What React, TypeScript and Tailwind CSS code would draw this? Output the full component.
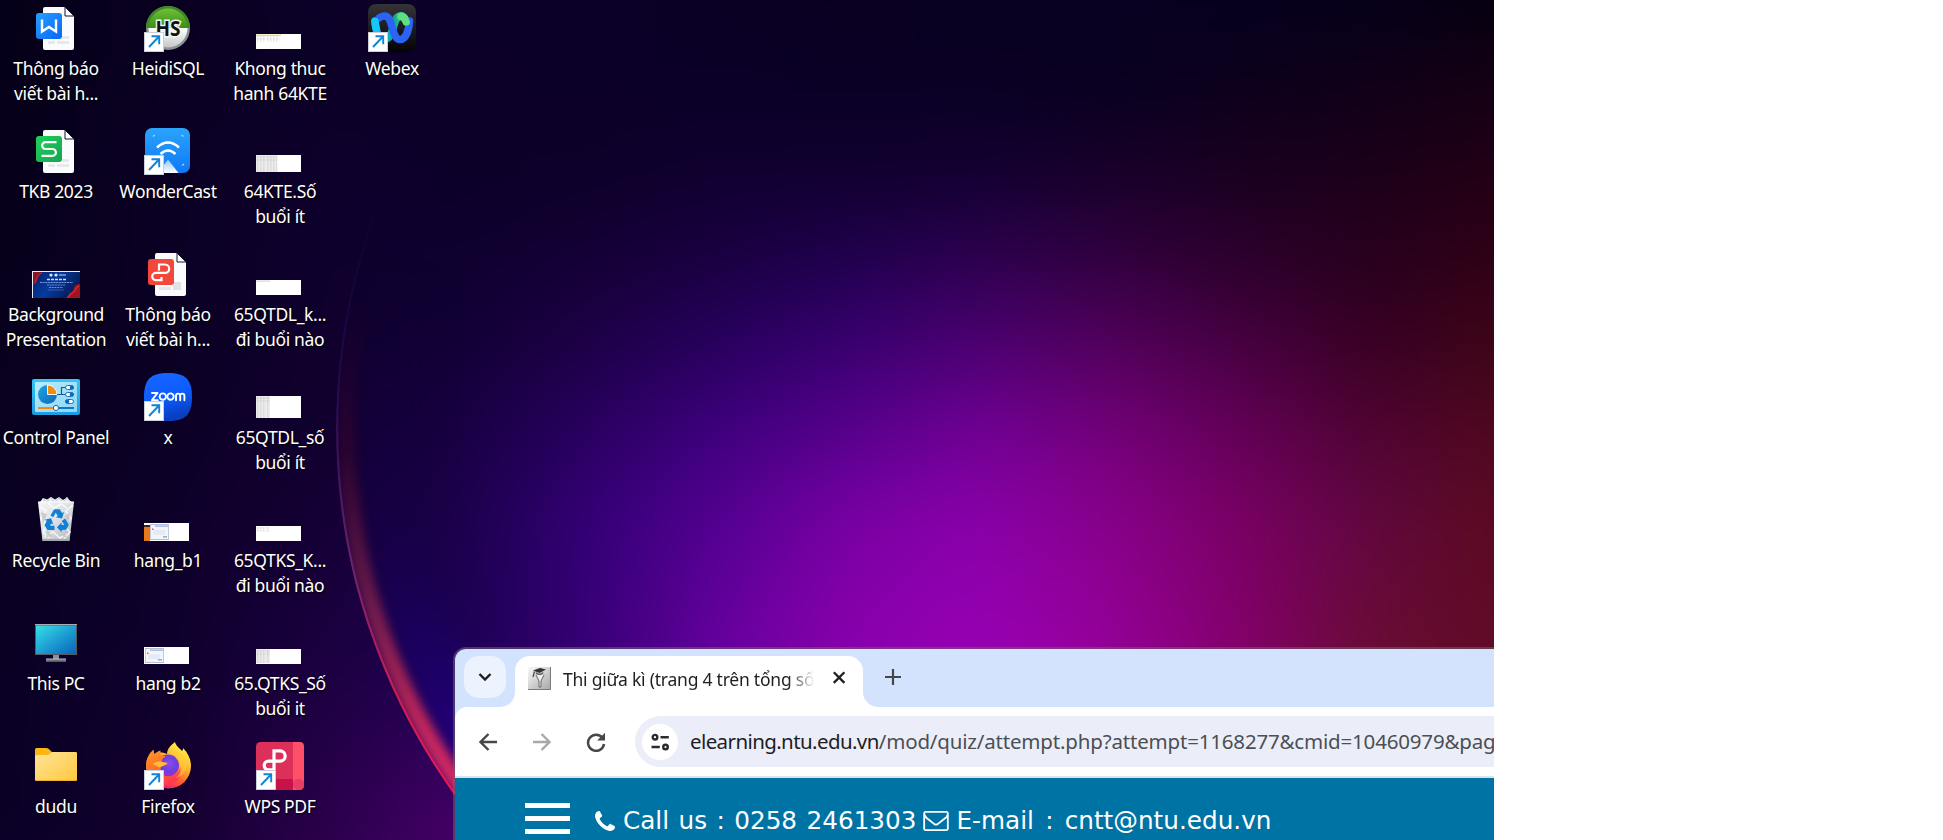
import React from "react";

/* ---------- wallpaper ---------- */

const meshX = [0, 170, 340, 460, 590, 720, 850, 980, 1110, 1240, 1370, 1494];

const mesh: { y: number; c: string[] }[] = [
  { y: 0, c: ["#050018", "#090020", "#0c0028", "#0b0028", "#0b0028", "#0a0024", "#090020", "#080020", "#070020", "#06001e", "#06001a", "#050010"] },
  { y: 87, c: ["#060019", "#0a0022", "#0c0028", "#0d002a", "#0c0028", "#0b0028", "#0a0026", "#0a0024", "#090020", "#0c001c", "#100018", "#160014"] },
  { y: 173, c: ["#06001a", "#0b0024", "#0e002c", "#0c0029", "#0d0029", "#100030", "#11002e", "#120032", "#18002a", "#1a0020", "#1c001a", "#220014"] },
  { y: 260, c: ["#07001b", "#0b0024", "#0f002e", "#0e0030", "#150036", "#1a0042", "#200050", "#2e0050", "#320040", "#2c002c", "#28001e", "#300016"] },
  { y: 347, c: ["#08001c", "#0b0024", "#10002e", "#130036", "#1e0048", "#280060", "#3a0072", "#4e0074", "#54005e", "#480042", "#3a0024", "#3e0618"] },
  { y: 433, c: ["#08001e", "#0c0026", "#120030", "#180044", "#2a0062", "#400080", "#58008e", "#720096", "#74007a", "#640058", "#500432", "#500820"] },
  { y: 520, c: ["#090020", "#0d0028", "#160036", "#1c004c", "#340078", "#540092", "#7a00a4", "#8a00aa", "#88008a", "#7a0064", "#600840", "#5c0a20"] },
  { y: 650, c: ["#0a0024", "#0e002c", "#1c0042", "#1c0052", "#360076", "#6800a0", "#8a00ac", "#9800b4", "#940098", "#84006c", "#6a0c34", "#600c28"] },
  { y: 840, c: ["#0a0026", "#12002e", "#2e0050", "#480068", "#480078", "#6a00a0", "#8a00ac", "#9600b4", "#920098", "#84006c", "#6a0c34", "#600c28"] },
];

function Wallpaper() {
  return (
    <svg className="absolute inset-0 h-full w-full" viewBox="0 0 1494 840" preserveAspectRatio="none" aria-hidden="true">
      <defs>
        {mesh.map((row, i) => (
          <linearGradient key={row.y} id={`row${i}`} gradientUnits="userSpaceOnUse" x1="0" y1="0" x2="1494" y2="0">
            {row.c.map((color, k) => (
              <stop key={meshX[k]} offset={meshX[k] / 1494} stopColor={color} />
            ))}
          </linearGradient>
        ))}
        <linearGradient id="rim" gradientUnits="userSpaceOnUse" x1="0" y1="200" x2="0" y2="800">
          <stop offset="0" stopColor="#2a1068" stopOpacity="0" />
          <stop offset="0.3" stopColor="#2c1464" stopOpacity="0.5" />
          <stop offset="0.6" stopColor="#6a2070" />
          <stop offset="0.8" stopColor="#c41c55" />
          <stop offset="1" stopColor="#ea1a50" />
        </linearGradient>
        <linearGradient id="band" gradientUnits="userSpaceOnUse" x1="0" y1="300" x2="0" y2="800">
          <stop offset="0" stopColor="#2c0030" stopOpacity="0" />
          <stop offset="0.3" stopColor="#30042e" stopOpacity="0.8" />
          <stop offset="0.6" stopColor="#6a1a4a" />
          <stop offset="0.85" stopColor="#c0265a" />
          <stop offset="1" stopColor="#d82a68" />
        </linearGradient>
        <linearGradient id="blue" gradientUnits="userSpaceOnUse" x1="0" y1="280" x2="0" y2="800">
          <stop offset="0" stopColor="#10003c" stopOpacity="0" />
          <stop offset="0.5" stopColor="#160048" stopOpacity="0.7" />
          <stop offset="1" stopColor="#22008c" />
        </linearGradient>
        <filter id="mesh" filterUnits="userSpaceOnUse" x="-120" y="-120" width="1734" height="1080" colorInterpolationFilters="sRGB"><feGaussianBlur stdDeviation="28" /></filter>
        <filter id="soft" filterUnits="userSpaceOnUse" x="280" y="-260" width="1400" height="1400" colorInterpolationFilters="sRGB"><feGaussianBlur stdDeviation="5" /></filter>
        <filter id="softer" filterUnits="userSpaceOnUse" x="240" y="-300" width="1480" height="1480" colorInterpolationFilters="sRGB"><feGaussianBlur stdDeviation="18" /></filter>
        <clipPath id="orb"><path d="M700 -141.800A628 628 0 0 0 700 997.800z" /></clipPath>
      </defs>
      <g filter="url(#mesh)">
        <rect x="-120" y="-120" width="1734" height="120" fill="url(#row0)" />
        {mesh.slice(0, -1).map((row, i) => {
          const h = mesh[i + 1].y - row.y;
          return (
            <g key={row.y}>
              <linearGradient id={`alpha${i}`} gradientUnits="userSpaceOnUse" x1="0" y1={row.y} x2="0" y2={row.y + h}>
                <stop offset="0" stopColor="#fff" stopOpacity="0" />
                <stop offset="1" stopColor="#fff" stopOpacity="1" />
              </linearGradient>
              <mask id={`lin${i}`} maskUnits="userSpaceOnUse" x="-120" y={row.y} width="1734" height={h} style={{ maskType: "alpha" }}>
                <rect x="-120" y={row.y} width="1734" height={h} fill={`url(#alpha${i})`} />
              </mask>
              <rect x="-120" y={row.y} width="1734" height={h} fill={`url(#row${i})`} />
              <rect x="-120" y={row.y} width="1734" height={h} fill={`url(#row${i + 1})`} mask={`url(#lin${i})`} />
            </g>
          );
        })}
        <rect x="-120" y="840" width="1734" height="120" fill="url(#row8)" />
      </g>
      <g clipPath="url(#orb)">
        <circle cx="964" cy="428" r="580" fill="none" stroke="url(#blue)" strokeWidth="70" filter="url(#softer)" />
        <circle cx="964" cy="428" r="618" fill="none" stroke="url(#band)" strokeWidth="18" filter="url(#soft)" />
        <circle cx="964" cy="428" r="627" fill="none" stroke="url(#rim)" strokeWidth="2.500" />
      </g>
    </svg>
  );
}

/* ---------- desktop icons (48 x 48 artboards) ---------- */

function Art({ children, shortcut = false }: { children: React.ReactNode; shortcut?: boolean }) {
  return (
    <svg className="block h-12 w-12" viewBox="0 0 48 48" aria-hidden="true">
      {children}
      {shortcut && (
        <g>
          <rect x="0" y="28" width="20" height="20" fill="#c9d0dc" />
          <rect x="1" y="29" width="18" height="18" fill="#fff" />
          <path d="M5 43L14.5 33M7.5 32.3h7.7v8" fill="none" stroke="#0f84d8" strokeWidth="1.9" />
        </g>
      )}
    </svg>
  );
}

function DocPage() {
  return (
    <g>
      <path d="M13 3h20l9 9v32a2 2 0 0 1-2 2H13a2 2 0 0 1-2-2V5a2 2 0 0 1 2-2z" fill="#fafbfd" />
      <path d="M33 3v9h9z" fill="#fff" stroke="#15152e" strokeWidth="1" />
      <path d="M16 38.5h7M25 38.5h12M30 33.5h7" stroke="#e3e6ea" strokeWidth="2.600" />
    </g>
  );
}

function WordDoc() {
  return (
    <Art>
      <defs>
        <linearGradient id="wd" x1="0" y1="0" x2="1" y2="1"><stop stopColor="#22a0ff" /><stop offset="1" stopColor="#0a66f8" /></linearGradient>
      </defs>
      <DocPage />
      <rect x="4" y="9" width="26" height="26" rx="3" fill="url(#wd)" />
      <path d="M10 15.500v12L17 23l7 4.500v-12" fill="none" stroke="#fff" strokeWidth="2.400" strokeLinejoin="miter" />
    </Art>
  );
}

function SheetDoc() {
  return (
    <Art>
      <defs>
        <linearGradient id="sd" x1="0" y1="0" x2="1" y2="1"><stop stopColor="#20d05a" /><stop offset="1" stopColor="#13a450" /></linearGradient>
      </defs>
      <DocPage />
      <rect x="4" y="9" width="26" height="26" rx="3" fill="url(#sd)" />
      <path d="M24.5 15.200h-11a3.400 3.400 0 0 0 0 6.800h7a3.400 3.400 0 0 1 0 6.800H9.500" fill="none" stroke="#fff" strokeWidth="2.200" />
    </Art>
  );
}

function PdfDoc() {
  return (
    <Art>
      <path d="M13 3h20l9 9v32a2 2 0 0 1-2 2H13a2 2 0 0 1-2-2V5a2 2 0 0 1 2-2z" fill="#fafbfd" />
      <path d="M33 3v9h9z" fill="#fff" stroke="#15152e" strokeWidth="1" />
      <path d="M15 38.5h12" stroke="#e3e6ea" strokeWidth="3" />
      <rect x="29" y="32" width="8" height="8" fill="#dfe2e6" />
      <rect x="4" y="9" width="26" height="26" rx="3" fill="#f4473c" />
      <path d="M15 20.500v-6h6a4.200 4.200 0 0 1 0 8.400h-9.200a3.600 3.600 0 0 0 0 7.200h5.700v-3" fill="none" stroke="#fff" strokeWidth="2.200" />
    </Art>
  );
}

function Heidi() {
  return (
    <Art shortcut>
      <defs>
        <linearGradient id="hg" x1="0" y1="0" x2="0" y2="1"><stop stopColor="#6fc038" /><stop offset="1" stopColor="#3a8d18" /></linearGradient>
        <linearGradient id="hw" x1="0" y1="0" x2="0" y2="1"><stop stopColor="#fff" /><stop offset="1" stopColor="#c4c6c8" /></linearGradient>
      </defs>
      <circle cx="24" cy="24" r="22" fill="#8d9196" />
      <path d="M2 24a22 22 0 0 1 44 0z" fill="#3c8a1c" />
      <path d="M4.500 24a19.500 19.500 0 0 1 39 0z" fill="url(#hg)" />
      <path d="M4.500 24a19.500 19.500 0 0 0 39 0z" fill="url(#hw)" />
      <text x="24" y="31.500" textAnchor="middle" fontFamily="Open Sans, sans-serif" fontWeight="700" fontSize="21" fill="#111" stroke="#f4f6f2" strokeWidth="3" paintOrder="stroke" textLength="25" lengthAdjust="spacingAndGlyphs">HS</text>
    </Art>
  );
}

function Wonder() {
  return (
    <Art shortcut>
      <defs>
        <linearGradient id="wc" x1="0" y1="0" x2="0" y2="1"><stop stopColor="#2aa4fb" /><stop offset="1" stopColor="#0f78f8" /></linearGradient>
        <linearGradient id="wt" x1="0" y1="0" x2="0" y2="1"><stop stopColor="#8cc8ff" /><stop offset="1" stopColor="#fff" /></linearGradient>
      </defs>
      <rect x="1" y="1" width="45" height="45" rx="7" fill="url(#wc)" />
      <path d="M13 20.500q11-10 22 0" fill="none" stroke="#fff" strokeWidth="2.600" />
      <path d="M16.500 27q7.500-7 15 0" fill="none" stroke="#fff" strokeWidth="2.600" />
      <path d="M24 32.500L34.500 46h-21z" fill="url(#wt)" />
      <path d="M9 9.500l1.800-1.500M37.500 8l2 1.500M38 38.500l2-1.500" stroke="#a9dbff" strokeWidth="1.200" />
    </Art>
  );
}

function Webex() {
  return (
    <Art shortcut>
      <defs>
        <linearGradient id="wb" x1="0" y1="0" x2="0" y2="1"><stop stopColor="#343438" /><stop offset="1" stopColor="#040406" /></linearGradient>
        <linearGradient id="w1" x1="0" y1="0" x2="1" y2="1"><stop stopColor="#12b8f8" /><stop offset="1" stopColor="#12a8a0" /></linearGradient>
        <linearGradient id="w3" x1="0" y1="0" x2="1" y2="0"><stop stopColor="#0ea08c" /><stop offset="1" stopColor="#5ce080" /></linearGradient>
      </defs>
      <rect width="48" height="48" rx="8" fill="url(#wb)" />
      <path d="M7 17c.500 10 4 18.500 9.500 18.500S24 28 26 21s4-9 8-9" fill="none" stroke="url(#w1)" strokeWidth="7.500" strokeLinecap="round" />
      <path d="M25 21c1.500-5.500 4-9 7.500-9 3 0 5 2.300 6 6" fill="none" stroke="url(#w3)" strokeWidth="7.500" strokeLinecap="round" />
      <path d="M11 14c2-1.500 3.500-2 5-2 5 0 6 4 8 11s4 12.500 8 12.500c5.500 0 9-8.500 9.500-18.500" fill="none" stroke="#2a63f6" strokeWidth="7.500" strokeLinecap="round" />
      <path d="M33 12.300c2.500.700 4.300 2.700 5.200 5.700" fill="none" stroke="#5ce080" strokeWidth="7.500" strokeLinecap="round" />
      <path d="M7 17.500c.300 3 .600 5 1.200 7" fill="none" stroke="#16c8fa" strokeWidth="7.500" strokeLinecap="round" />
    </Art>
  );
}

function Zoom() {
  return (
    <Art shortcut>
      <defs>
        <linearGradient id="zm" x1="0" y1="0" x2="0.300" y2="1"><stop stopColor="#1a66ff" /><stop offset="0.600" stopColor="#0b5cff" /><stop offset="1" stopColor="#0840c0" /></linearGradient>
      </defs>
      <path d="M24 0c17 0 24 6 24 24s-7 24-24 24S0 42 0 24 7 0 24 0z" fill="url(#zm)" />
      <g fill="none" stroke="#fff" strokeWidth="1.900" strokeLinejoin="round" strokeLinecap="round">
        <path d="M8 20h5.500L8 27.200h5.800" />
        <circle cx="18.800" cy="23.600" r="3.200" />
        <circle cx="26.500" cy="23.600" r="3.200" />
        <path d="M32 27.300v-4.600a2.100 2.100 0 0 1 4.200 0v4.600M36.200 22.700a2.100 2.100 0 0 1 4.200 0v4.600" />
      </g>
    </Art>
  );
}

function ControlPanel() {
  return (
    <Art>
      <defs>
        <linearGradient id="cp" x1="0" y1="0" x2="0" y2="1"><stop stopColor="#38c6f6" /><stop offset="1" stopColor="#1d9ade" /></linearGradient>
        <linearGradient id="ci" x1="0" y1="0" x2="1" y2="1"><stop stopColor="#b8ecfc" /><stop offset="1" stopColor="#8cd6f4" /></linearGradient>
        <linearGradient id="cb" x1="0" y1="0" x2="1" y2="1"><stop stopColor="#1fa4e4" /><stop offset="1" stopColor="#0c68b8" /></linearGradient>
      </defs>
      <rect y="6" width="48" height="36" rx="2" fill="url(#cp)" />
      <rect x="3" y="9" width="42" height="30" rx="1" fill="url(#ci)" />
      <circle cx="15.500" cy="21.500" r="9.500" fill="url(#cb)" />
      <path d="M15.500 21.500V12a9.500 9.500 0 0 1 9.500 9.500z" fill="#f58c10" stroke="#eefaff" strokeWidth="1" />
      <path d="M25 21.500h4.500v-7H34M29.500 21.500H34" fill="none" stroke="#1a5a90" strokeWidth="1.200" />
      <g fill="#fff" stroke="#1374c0" strokeWidth="1">
        <rect x="33.500" y="12.500" width="8" height="4" rx="2" /><rect x="33.500" y="19.500" width="8" height="4" rx="2" /><rect x="33.500" y="26.500" width="8" height="4" rx="2" />
      </g>
      <circle cx="39.700" cy="14.500" r="2" fill="#0c68b8" /><circle cx="39.700" cy="21.500" r="2" fill="#0c68b8" /><circle cx="35.300" cy="28.500" r="2" fill="#0c68b8" />
      <path d="M6 35h18" stroke="#f58c10" strokeWidth="2" /><path d="M24 35h18" stroke="#0f78c8" strokeWidth="2" />
      <circle cx="24" cy="35" r="2.600" fill="#fff" stroke="#0c68b8" strokeWidth="1" />
    </Art>
  );
}

function RecycleBin() {
  return (
    <Art>
      <defs>
        <linearGradient id="rb" x1="0" y1="0" x2="1" y2="1"><stop stopColor="#f4f6f8" /><stop offset="0.500" stopColor="#dcdfe3" /><stop offset="1" stopColor="#b0b4ba" /></linearGradient>
      </defs>
      <path d="M8 6l3-4 4 1.500L19 1l4 2.500L27 1l4 3 4-2.500 3 3 3 3H7z" fill="#eceef0" />
      <path d="M11 2l3 5 5-6 3 6 5-5 4 5 4-6 3 5" fill="none" stroke="#b9bdc4" strokeWidth="0.800" />
      <path d="M6 6h36l-4.500 39h-27z" fill="url(#rb)" />
      <path d="M6 6h36" stroke="#fff" strokeWidth="1.200" />
      <path d="M7 10l7 5-5 7 6 8-4 6 6 6M41 9l-7 6 5 7-6 9 5 5-6 7M16 7l6 5 7-4 6 4M13 41l8-5 7 6 7-4" fill="none" stroke="#fff" strokeWidth="1.500" opacity="0.800" />
      <path d="M9 16l6 2-4 10zM38 16l-5 4 4 9zM15 34l5 5-6 3zM34 35l-4 5 5 2z" fill="#c2c6cb" opacity="0.800" />
      <path d="M10.500 43h27l-.3 2h-26.400z" fill="#a5a9af" />
      <g fill="#0f80d8">
        <path d="M18.500 19.500l3-5.200a2 2 0 0 1 1.700-1h4.500l2.300 3.700 2-1-2 6.500-6.200-1.300 2-1.200-2-3.200-2.600 4.500z" />
        <path d="M33 22.500l3.300 5.200a2 2 0 0 1 0 2l-2.200 4-4.500.200v2.300l-4.600-4.900 4.600-4.800v2.400h2.800l-2.600-4z" />
        <path d="M22.500 34h-6a2 2 0 0 1-1.800-1L12.600 29l2.200-4.200-2-1 6.400-1.600 2 6.300-2-1-1.200 2.200h4.500z" />
      </g>
    </Art>
  );
}

function ThisPC() {
  return (
    <Art>
      <defs>
        <linearGradient id="pc" x1="0" y1="0" x2="1" y2="1"><stop stopColor="#38e0e4" /><stop offset="0.500" stopColor="#1ea0d4" /><stop offset="1" stopColor="#0a62b8" /></linearGradient>
      </defs>
      <rect x="21" y="36" width="6" height="5" fill="#8b9198" />
      <rect x="14" y="40" width="20" height="2.800" fill="#6c7279" />
      <path d="M14 40h20" stroke="#b9bec4" strokeWidth="1" />
      <rect x="3" y="5" width="42" height="31" rx="0.600" fill="#545a62" />
      <path d="M3 5.500h42" stroke="#a8adb3" strokeWidth="1" />
      <rect x="4" y="6.500" width="40" height="28.500" fill="url(#pc)" />
    </Art>
  );
}

function Folder() {
  return (
    <Art>
      <defs>
        <linearGradient id="fo" x1="0" y1="0" x2="1" y2="1"><stop stopColor="#ffe49a" /><stop offset="1" stopColor="#ffc93c" /></linearGradient>
      </defs>
      <path d="M4.500 6h10a3 3 0 0 1 2 .8L20 10h23.500A1.500 1.500 0 0 1 45 11.500V20H3V7.500A1.500 1.500 0 0 1 4.500 6z" fill="#fbb615" />
      <path d="M3 14.500A1.500 1.500 0 0 1 4.500 13h11a3 3 0 0 0 2-.800l1.500-1.400a3 3 0 0 1 2-.800h22.500A1.500 1.500 0 0 1 45 11.500v26a1.500 1.500 0 0 1-1.500 1.500h-39A1.500 1.500 0 0 1 3 37.500z" fill="url(#fo)" />
      <path d="M3.500 38.500h41" stroke="#e8ac28" strokeWidth="0.800" />
    </Art>
  );
}

function Firefox() {
  return (
    <Art shortcut>
      <defs>
        <linearGradient id="ff" x1="0.800" y1="0.100" x2="0.250" y2="0.950"><stop stopColor="#fff04a" /><stop offset="0.350" stopColor="#ffb02a" /><stop offset="0.650" stopColor="#ff5a30" /><stop offset="1" stopColor="#e8167a" /></linearGradient>
        <radialGradient id="fp" cx="0.550" cy="0.400" r="0.600"><stop stopColor="#8a4cf0" /><stop offset="0.600" stopColor="#6a40e0" /><stop offset="1" stopColor="#a02cc8" /></radialGradient>
        <linearGradient id="fx" x1="0" y1="0" x2="0.600" y2="1"><stop stopColor="#ff9c20" /><stop offset="0.600" stopColor="#ff6a2a" /><stop offset="1" stopColor="#ff3a50" /></linearGradient>
      </defs>
      <path d="M31 0c1 4 4 5.500 7 9 1-1 1-2 1-3 5 5 8 11 8 18a22.500 22.500 0 0 1-45 0c0-6 2-10 5-14l1 4c5-5 10-4 15-2 0-5 4-9 8-12z" fill="url(#ff)" />
      <circle cx="24" cy="23.500" r="11" fill="url(#fp)" />
      <path d="M9.500 7.500l.8 4.500c1.700-1.500 4-3 6.200-3.500l-.3 4.500c2.300 0 4 .500 5.500 1.800-2.500.7-4 2.200-4 4.700 1.700 1.500 4.800.5 6.300 1.300-.7 2.700-5.200 3-7 4.200-1.500 5 2.500 9.500 7 9.500 7 0 11.500-4.500 12.500-10 3 8-3 17-12.500 18.500C12 44.500 2 36 2 24.500 2 17 5.500 11 9.500 7.500z" fill="url(#fx)" />
      <path d="M9 22c3-3 7-3.500 14-.8-2 2.800-5.500 2.500-7.500 4.300z" fill="#ffbd38" />
      <path d="M30 13c5 3 6.500 7.500 6.500 13 0 4-2 8-5.500 10.500C38 35 43 29 42.500 21 42 15 38 12 35 9z" fill="#ffd23c" opacity="0.550" />
    </Art>
  );
}

function WpsPdf() {
  return (
    <Art shortcut>
      <defs>
        <clipPath id="wpsClip"><rect width="48" height="48" rx="4.500" /></clipPath>
      </defs>
      <g clipPath="url(#wpsClip)">
        <rect width="48" height="48" fill="#dc2f5a" />
        <rect y="37" width="40" height="11" fill="#c8134a" />
        <rect x="37" width="11" height="48" fill="#fe5068" />
        <rect x="37" y="37" width="11" height="11" rx="5" fill="#e63e64" />
      </g>
      <path d="M18 28V8.800h6a5.200 5.200 0 0 1 0 10.400h-11.500a4.300 4.300 0 0 0 0 8.600h5" fill="none" stroke="#fff" strokeWidth="3.200" />
    </Art>
  );
}

function Poster() {
  return (
    <Art>
      <defs>
        <linearGradient id="po" x1="0" y1="0" x2="1" y2="0.400"><stop stopColor="#04206a" /><stop offset="0.500" stopColor="#063a9c" /><stop offset="1" stopColor="#041c58" /></linearGradient>
      </defs>
      <rect x="0" y="21" width="48" height="27" fill="#e8ecf4" />
      <rect x="1" y="22" width="47" height="26" fill="url(#po)" />
      <path d="M1 35c3-1 4-4 5-8s3-5 6-5H1z" fill="#8e1424" /><path d="M3 33c2-4 2-9 7-10" fill="none" stroke="#d8202c" strokeWidth="1.200" />
      <path d="M48 34c-4 0-6 2-7 6s-5 4-7 8h14z" fill="#a01422" /><path d="M47 36c-4 1-3 6-7 7-3 1-3 3-4 5" fill="none" stroke="#dc2430" strokeWidth="1.400" />
      <circle cx="19" cy="25" r="1.600" fill="#dfe8ff" /><circle cx="24" cy="25" r="1.600" fill="#dfe8ff" /><path d="M27 25h7" stroke="#8fa8e0" strokeWidth="1.400" />
      <path d="M15 29.500h20" stroke="#d0dcff" strokeWidth="1.500" strokeDasharray="3 1" />
      <path d="M8 32.500h33" stroke="#7c98e0" strokeWidth="1" strokeDasharray="2 .7" /><path d="M15 35h18M17 37.500h14" stroke="#6a88d4" strokeWidth="1" strokeDasharray="2 .7" /><path d="M16 40h16" stroke="#3e60b8" strokeWidth="0.800" />
    </Art>
  );
}

function Thumb({ h, children }: { h: number; children?: React.ReactNode }) {
  return (
    <svg className="block w-12" viewBox={`0 ${h - 45} 48 48`} height={48} aria-hidden="true">
      <rect width="45" height={h} fill="#fff" />
      {children}
    </svg>
  );
}

function Lines({ w, h, columns = true }: { w: number; h: number; columns?: boolean }) {
  return (
    <g>
      {columns && <rect width={w} height={h} fill="#ececec" />}
      {[1, 4, 7, 11, 14, 17, 20].filter((x) => x < w).map((x) => (
        <rect key={x} x={x} y="1" width="1.4" height={h - 1} fill="#a8a8a8" opacity="0.22" />
      ))}
      {[1.5, 4.5].filter((y) => y < h).map((y) => (
        <rect key={y} y={y} width={w} height="1" fill="#9a9a9a" opacity="0.2" />
      ))}
    </g>
  );
}

function WindowShot({ x, w, h }: { x: number; w: number; h: number }) {
  return (
    <g>
      <rect x={x} y="1" width={w} height={h - 2} fill="#b9bfc9" />
      <rect x={x + 0.8} y="2" width={w - 1.6} height={h - 4} fill="#f3f5f9" />
      <rect x={x + 5} y="2.400" width={w - 6} height="1.600" fill="#a9c0ee" />
      <rect x={x + 3} y="7" width={w - 7} height="5" fill="#e6eaf2" />
      <rect x={x + w - 6} y={h - 5} width="4" height="1.600" fill="#8fb0ee" />
      <rect x={x + 2} y="5.500" width="1.500" height="1.500" fill="#e06050" />
    </g>
  );
}

type Item = { id: string; art: React.ReactNode; lines: string[] };

const columns: Item[][] = [
  [
    { id: "w", art: <WordDoc />, lines: ["Thông báo", "viết bài h..."] },
    { id: "s", art: <SheetDoc />, lines: ["TKB 2023"] },
    { id: "bg", art: <Poster />, lines: ["Background", "Presentation"] },
    { id: "cp", art: <ControlPanel />, lines: ["Control Panel"] },
    { id: "rb", art: <RecycleBin />, lines: ["Recycle Bin"] },
    { id: "pc", art: <ThisPC />, lines: ["This PC"] },
    { id: "fo", art: <Folder />, lines: ["dudu"] },
  ],
  [
    { id: "hs", art: <Heidi />, lines: ["HeidiSQL"] },
    { id: "wc", art: <Wonder />, lines: ["WonderCast"] },
    { id: "pd", art: <PdfDoc />, lines: ["Thông báo", "viết bài h..."] },
    { id: "zm", art: <Zoom />, lines: ["x"] },
    { id: "h1", art: <Thumb h={18}><rect y="2" width="6" height="16" fill="#e8781e" /><rect y="2" width="6" height="2" fill="#3a2016" /><WindowShot x={6} w={19} h={18} /></Thumb>, lines: ["hang_b1"] },
    { id: "h2", art: <Thumb h={17}><WindowShot x={1} w={19} h={17} /></Thumb>, lines: ["hang b2"] },
    { id: "ff", art: <Firefox />, lines: ["Firefox"] },
  ],
  [
    { id: "k1", art: <Thumb h={15}><Lines w={24} h={8} columns={false} /><rect y="0.600" width="25" height="1.200" fill="#e6da70" /></Thumb>, lines: ["Khong thuc", "hanh 64KTE"] },
    { id: "k2", art: <Thumb h={17}><Lines w={21} h={17} /></Thumb>, lines: ["64KTE.Số", "buổi ít"] },
    { id: "k3", art: <Thumb h={15}><rect y="0.500" width="14" height="1.200" fill="#d5d5d5" /></Thumb>, lines: ["65QTDL_k...", "đi buổi nào"] },
    { id: "k4", art: <Thumb h={22}><Lines w={14} h={22} /></Thumb>, lines: ["65QTDL_số", "buổi ít"] },
    { id: "k5", art: <Thumb h={15}><Lines w={14} h={5} columns={false} /></Thumb>, lines: ["65QTKS_K...", "đi buổi nào"] },
    { id: "k6", art: <Thumb h={15}><Lines w={14} h={14} /></Thumb>, lines: ["65.QTKS_Số", "buổi it"] },
    { id: "wp", art: <WpsPdf />, lines: ["WPS PDF"] },
  ],
  [{ id: "wx", art: <Webex />, lines: ["Webex"] }],
];

function DesktopIcon({ item }: { item: Item }) {
  return (
    <div className="flex h-[123px] w-28 flex-col items-center">
      {item.art}
      <div className="mt-1 text-center text-[17.5px] leading-[25px] tracking-[-0.35px] text-white [text-shadow:1px_1px_2px_#000]">
        {item.lines.map((l) => (
          <div key={l} className="whitespace-nowrap">{l}</div>
        ))}
      </div>
    </div>
  );
}

/* ---------- browser window ---------- */

function Favicon() {
  return (
    <svg className="h-[23px] w-[23px] shrink-0" viewBox="0 0 23 23" aria-hidden="true">
      <defs>
        <linearGradient id="fv" x1="0" y1="0" x2="1" y2="1"><stop stopColor="#fafafa" /><stop offset="1" stopColor="#a6a6a6" /></linearGradient>
      </defs>
      <rect width="23" height="23" fill="url(#fv)" />
      <path d="M0 22.500h22.500V0" fill="none" stroke="#7a7a7a" strokeWidth="1" />
      <path d="M5 3.500L12 1l6 1.500L11.500 6z" fill="#333" />
      <path d="M6.500 4.500L5 10M8 5.500c1 2.500 6 2.500 7 0" fill="none" stroke="#555" strokeWidth="1.400" />
      <path d="M8 8l3 6v6h2v-6l3-6" fill="#eee" stroke="#666" strokeWidth="1" />
    </svg>
  );
}

function TabStrip() {
  return (
    <div className="flex h-[58px] items-start bg-[#d3e3fd] pt-[7px] pl-[9px]">
      <div className="flex h-[42px] w-[42px] items-center justify-center rounded-[15px] bg-[#ecf2fe]">
        <svg className="h-5 w-5" viewBox="0 0 20 20" aria-hidden="true"><path d="M4.500 7l5.500 5.500L15.500 7" fill="none" stroke="#1f1f1f" strokeWidth="2.400" /></svg>
      </div>
      <svg className="-ml-1.5 mt-9 h-[15px] w-[15px]" viewBox="0 0 15 15" aria-hidden="true"><path d="M15 0v15H0A15 15 0 0 0 15 0z" fill="#fff" /></svg>
      <div className="flex h-[51px] w-[348px] items-center rounded-t-[15px] bg-white pr-4 pb-[7px] pl-[13px]">
        <Favicon />
        <div className="mt-0.5 ml-3 w-[252px] text-[17.5px] leading-7 tracking-[-0.23px] whitespace-nowrap text-[#1f1f1f] [mask-image:linear-gradient(to_right,#000_225px,transparent_252px)]">
          Thi giữa kì (trang 4 trên tổng số
        </div>
        <svg className="ml-auto h-4 w-4" viewBox="0 0 16 16" aria-hidden="true"><path d="M2.800 2.300l10.600 10.600M13.400 2.300L2.800 12.900" stroke="#1f1f1f" strokeWidth="2.300" /></svg>
      </div>
      <svg className="mt-9 h-[15px] w-[15px]" viewBox="0 0 15 15" aria-hidden="true"><path d="M0 0v15h15A15 15 0 0 1 0 0z" fill="#fff" /></svg>
      <svg className="mt-[13px] ml-[7px] h-4 w-4" viewBox="0 0 16 16" aria-hidden="true"><path d="M8 0v16M0 8h16" stroke="#444746" strokeWidth="2.200" /></svg>
    </div>
  );
}

function Toolbar() {
  return (
    <div className="bg-[#d3e3fd]">
      <div className="flex h-[69px] items-center rounded-tl-[12px] bg-white pl-6">
        <svg className="h-[18px] w-[18px]" viewBox="0 0 18 18" aria-hidden="true"><path d="M18 9H1.500M9.500 1L1.500 9l8 8" fill="none" stroke="#474747" strokeWidth="2.400" /></svg>
        <svg className="ml-9 h-[18px] w-[18px]" viewBox="0 0 18 18" aria-hidden="true"><path d="M0 9h16.500M8.500 1l8 8-8 8" fill="none" stroke="#a8a8a8" strokeWidth="2.400" /></svg>
        <svg className="ml-[35px] h-5 w-5" viewBox="0 0 20 20" aria-hidden="true"><path d="M16.500 6A8 8 0 1 0 18 12" fill="none" stroke="#474747" strokeWidth="2.500" /><path d="M19 .8v7.800h-7.800z" fill="#474747" /></svg>
        <div className="ml-[29px] flex h-[51px] min-w-0 flex-1 items-center overflow-hidden rounded-l-full bg-[#ebeef8] pl-[7px]">
          <div className="flex h-9 w-9 shrink-0 items-center justify-center rounded-full bg-white">
            <svg className="h-[18px] w-[18px]" viewBox="0 0 18 18" aria-hidden="true">
              <g fill="none" stroke="#2a2b2c" strokeWidth="2.400"><circle cx="4" cy="4.200" r="2.300" /><path d="M9.500 4.200h8.300M.5 14h8.300" /><circle cx="14.500" cy="14" r="2.300" /></g>
            </svg>
          </div>
          <div className="ml-3 text-[20.500px] tracking-[-0.18px] whitespace-nowrap text-[#4c4f54]">
            <span className="tracking-[-0.6px] text-[#1f2023]">elearning.ntu.edu.vn</span>/mod/quiz/attempt.php?attempt=1168277&amp;cmid=10460979&amp;pag
          </div>
        </div>
      </div>
    </div>
  );
}

function SiteHeader() {
  return (
    <div className="flex h-16 items-start border-t-2 border-[#dce4e6] bg-[#0073a5] pl-[70px] text-white">
      <div className="mt-[25px] flex w-[45px] flex-col gap-2">
        <div className="h-[5px] bg-white" />
        <div className="h-[5px] bg-white" />
        <div className="h-[5px] bg-white" />
      </div>
      <div className="mt-[27px] ml-[25px] flex items-center font-['DejaVu_Sans','Noto_Sans',sans-serif] text-[24.700px] leading-[32px] whitespace-pre">
        <svg className="h-5 w-5" viewBox="0 128 1408 1408" fill="currentColor" aria-hidden="true">
          <path d="M1408 1240q0 27-10 70.500t-20.500 68.500q-21 50-122 106-94 51-186 51-27 0-52.500-3.500t-57.500-12.500-47.500-14.500-55.500-20.500-49-18q-98-35-175-83-128-79-264.500-215.500t-215.500-264.500q-48-77-83-175-3-9-18-49t-20.500-55.500-14.500-47.500-12.500-57.500-3.500-52.500q0-92 51-186 56-101 106-122 25-10 68.500-20.500t70.500-10.500q14 0 21 3 18 6 53 76 11 19 30 54t35 63.500 31 53.500q3 4 17.500 25t21.500 35.500 7 28.500q0 20-28.500 50t-62 55-62 53-28.500 46q0 9 5 22.500t8.500 20.500 14 24 11.500 19q76 137 174 235t235 174q2 1 19 11.500t24 14 20.500 8.500 22.500 5q18 0 46-28.500t53-62 55-62 50-28.500q14 0 28.500 7t35.500 21.500 25 17.500q25 15 53.500 31t63.500 35 54 30q70 35 76 53 3 7 3 21z" />
        </svg>
        <span className="ml-2 [word-spacing:1.600px]">Call us : 0258 2461303</span>
        <svg className="ml-[7px] h-5 w-[26px]" viewBox="0 256 1792 1408" fill="currentColor" aria-hidden="true">
          <path d="M1664 1504v-768q-32 36-69 66-268 206-426 338-51 43-83 67t-86.500 48.500-102.500 24.500h-2q-48 0-102.500-24.500t-86.500-48.500-83-67q-158-132-426-338-37-30-69-66v768q0 13 9.500 22.500t22.500 9.500h1472q13 0 22.500-9.500t9.500-22.500zm0-1051v-24.500l-.5-13-3-12.500-5.500-9-9-7.500-14-2.500h-1472q-13 0-22.500 9.500t-9.500 22.500q0 168 147 284 193 152 401 317 6 5 35 29.500t46 37.500 44.500 31.500 50.500 27.500 43 9h2q20 0 43-9t50.500-27.500 44.500-31.500 46-37.500 35-29.500q208-165 401-317 54-43 100.500-115.500t46.500-131.500zm128-37v1088q0 66-47 113t-113 47h-1472q-66 0-113-47t-47-113v-1088q0-66 47-113t113-47h1472q66 0 113 47t47 113z" />
        </svg>
        <span className="ml-[7px] [word-spacing:3.400px]">E-mail : cntt@ntu.edu.vn</span>
      </div>
    </div>
  );
}

function BrowserWindow() {
  return (
    <div className="absolute top-[647px] left-[453px] h-[193px] w-[1041px] overflow-hidden rounded-tl-[13px] border-t-2 border-l-2 border-[rgba(110,100,110,0.55)]">
      <TabStrip />
      <Toolbar />
      <SiteHeader />
    </div>
  );
}

export default function App() {
  return (
    <div className="h-[840px] w-[1943px] overflow-hidden bg-white font-['Noto_Sans',sans-serif]">
      <div className="relative h-full w-[1494px] overflow-hidden bg-[#06001a]">
        <Wallpaper />
        <div className="relative flex pt-1">
          {columns.map((col) => (
            <div key={col[0].id} className="flex flex-col">
              {col.map((item) => (
                <DesktopIcon key={item.id} item={item} />
              ))}
            </div>
          ))}
        </div>
        <BrowserWindow />
      </div>
    </div>
  );
}
